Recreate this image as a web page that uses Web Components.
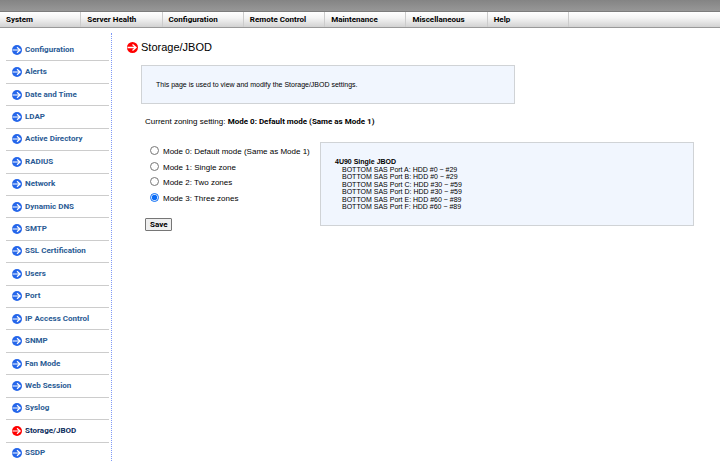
<!DOCTYPE html>
<html lang="en">
<head>
<meta charset="utf-8">
<title>Storage/JBOD</title>
<style>
    /* the side menu runs on below the fold */
    html { overflow: hidden; }
    body {
        margin: 0;
        background: #fff;
        color: #000;
        font: 8px/12px Roboto, "Liberation Sans", Arial, sans-serif;
    }
    .columns {
        display: flex;
        align-items: flex-start;
    }
</style>
</head>
<body>
<menu-bar items="System,Server Health,Configuration,Remote Control,Maintenance,Miscellaneous,Help"></menu-bar>
<div class="columns">
    <side-menu current="Storage/JBOD" items="Configuration,Alerts,Date and Time,LDAP,Active Directory,RADIUS,Network,Dynamic DNS,SMTP,SSL Certification,Users,Port,IP Access Control,SNMP,Fan Mode,Web Session,Syslog,Storage/JBOD,SSDP"></side-menu>
    <storage-page>
        <span slot="title">Storage/JBOD</span>
        <info-box slot="intro">This page is used to view and modify the Storage/JBOD settings.</info-box>
        <span slot="current">Mode 0: Default mode (Same as Mode 1)</span>
        <zone-form slot="form" selected="3" modes="Mode 0: Default mode (Same as Mode 1),Mode 1: Single zone,Mode 2: Two zones,Mode 3: Three zones"></zone-form>
        <info-box slot="details">
            <port-list heading="4U90 Single JBOD" ports="BOTTOM SAS Port A: HDD #0 ~ #29,BOTTOM SAS Port B: HDD #0 ~ #29,BOTTOM SAS Port C: HDD #30 ~ #59,BOTTOM SAS Port D: HDD #30 ~ #59,BOTTOM SAS Port E: HDD #60 ~ #89,BOTTOM SAS Port F: HDD #60 ~ #89"></port-list>
        </info-box>
    </storage-page>
</div>

<script>
const listOf = (el, name) => (el.getAttribute(name) || '').split(',');

// Round bullet with a white arrow
class ArrowIcon extends HTMLElement {
    constructor() {
        super();
        this.attachShadow({ mode: 'open' });
        this.shadowRoot.innerHTML = `
        <style>
            :host { display: block; width: 10px; height: 10px; color: #2566ea; }
            svg { display: block; width: 100%; height: 100%; }
        </style>
        <svg viewBox="0 0 22 22" aria-hidden="true">
            <circle cx="11" cy="11" r="11" fill="currentColor"/>
            <path d="M1 11H18M11 5L18 11L11 17" fill="none" stroke="#fff" stroke-width="2.6"/>
        </svg>`;
    }
}
customElements.define('arrow-icon', ArrowIcon);

class MenuBar extends HTMLElement {
    connectedCallback() {
        this.attachShadow({ mode: 'open' });
        this.shadowRoot.innerHTML = `
        <style>
            :host { display: block; }
            .strip {
                height: 11px;
                background: linear-gradient(#848484, #979797);
                border-bottom: 1px solid #7c7c7c;
            }
            nav {
                height: 15px;
                background: linear-gradient(#fff, #f4f4f4 40%, #d2d2d2);
                border-bottom: 1px solid #999;
            }
            ul {
                display: grid;
                grid-template-columns: repeat(7, 1fr);
                width: 569px;
                margin: 0;
                padding: 0;
                list-style: none;
            }
            li { border-right: 1px solid #ccc; }
            a {
                display: block;
                padding-left: 6px;
                font-weight: bold;
                line-height: 15px;
                color: #000;
                text-decoration: none;
            }
        </style>
        <div class="strip"></div>
        <nav><ul>${listOf(this, 'items').map(t => `<li><a href="#">${t}</a></li>`).join('')}</ul></nav>`;
    }
}
customElements.define('menu-bar', MenuBar);

class SideMenu extends HTMLElement {
    connectedCallback() {
        const current = this.getAttribute('current');
        this.attachShadow({ mode: 'open' });
        this.shadowRoot.innerHTML = `
        <style>
            :host {
                display: block;
                flex: none;
                width: 105px;
                margin-top: 5px;
                padding: 6px 0 0 6px;
                border-right: 1px dotted #7f9af6;
            }
            ul {
                display: grid;
                grid-auto-rows: 1fr;
                height: 426px;
                width: 103px;
                margin: 0;
                padding: 0;
                list-style: none;
            }
            li {
                display: flex;
                align-items: center;
                border-bottom: 1px solid #ccc;
            }
            a {
                display: flex;
                align-items: center;
                gap: 3px;
                padding-left: 6px;
                font-weight: bold;
                color: #2a5b94;
                text-decoration: none;
            }
            a[aria-current] { color: #0b2c5c; }
            a[aria-current] arrow-icon { color: #f00; }
        </style>
        <nav><ul>${listOf(this, 'items').map(t => `
            <li><a href="#"${t === current ? ' aria-current="page"' : ''}><arrow-icon></arrow-icon>${t}</a></li>`).join('')}
        </ul></nav>`;
    }
}
customElements.define('side-menu', SideMenu);

class InfoBox extends HTMLElement {
    constructor() {
        super();
        this.attachShadow({ mode: 'open' });
        this.shadowRoot.innerHTML = `
        <style>
            :host {
                display: block;
                box-sizing: border-box;
                padding: 14px;
                border: 1px solid #d0d3d6;
                background: #f1f6fe;
                font-family: "Liberation Sans", Arial, sans-serif;
                font-size: 7px;
                line-height: 9px;
            }
        </style>
        <slot></slot>`;
    }
}
customElements.define('info-box', InfoBox);

class PortList extends HTMLElement {
    connectedCallback() {
        this.attachShadow({ mode: 'open' });
        this.shadowRoot.innerHTML = `
        <style>
            :host { display: grid; grid-auto-rows: 1fr; height: 53px; padding-top: 1px; line-height: 7px; }
            div { padding-left: 7px; }
        </style>
        <strong>${this.getAttribute('heading')}</strong>
        ${listOf(this, 'ports').map(t => `<div>${t}</div>`).join('')}`;
    }
}
customElements.define('port-list', PortList);

class ZoneForm extends HTMLElement {
    connectedCallback() {
        const selected = Number(this.getAttribute('selected'));
        this.attachShadow({ mode: 'open' });
        this.shadowRoot.innerHTML = `
        <style>
            :host { display: block; }
            .modes {
                display: grid;
                grid-auto-rows: 1fr;
                height: 63px;
                padding-left: 5px;
            }
            label { display: flex; align-items: flex-end; gap: 4px; }
            input { width: 9px; height: 9px; margin: 0 0 3px; accent-color: #0b6cf5; }
            span { line-height: 12px; }
            button {
                margin-top: 13px;
                padding: 0 4px;
                border: 1px solid #767676;
                border-radius: 1px;
                background: #efefef;
                color: #000;
                font: bold 8px/11px Roboto, "Liberation Sans", Arial, sans-serif;
            }
        </style>
        <form>
            <div class="modes">${listOf(this, 'modes').map((t, i) => `
                <label><input type="radio" name="mode"${i === selected ? ' checked' : ''}><span>${t}</span></label>`).join('')}
            </div>
            <button type="button">Save</button>
        </form>`;
    }
}
customElements.define('zone-form', ZoneForm);

class StoragePage extends HTMLElement {
    constructor() {
        super();
        this.attachShadow({ mode: 'open' });
        this.shadowRoot.innerHTML = `
        <style>
            :host {
                display: block;
                flex: 1;
                padding: 12px 26px 0 15px;
                font-family: "Liberation Sans", Arial, sans-serif;
            }
            h1 {
                display: flex;
                align-items: center;
                gap: 3px;
                margin: 0;
                font-size: 11px;
                font-weight: normal;
                line-height: 14px;
            }
            arrow-icon { width: 11px; height: 11px; color: #f00; }
            .intro { display: grid; max-width: 374px; margin: 11px 0 0 14px; }
            .current { margin: 12px 0 0 18px; }
            b { font-family: Roboto, Arial, sans-serif; }
            .zones {
                display: grid;
                grid-template-columns: 175px 1fr;
                align-items: start;
                margin: 14px 0 0 18px;
            }
        </style>
        <h1><arrow-icon></arrow-icon><slot name="title"></slot></h1>
        <div class="intro"><slot name="intro"></slot></div>
        <div class="current">Current zoning setting: <b><slot name="current"></slot></b></div>
        <div class="zones"><slot name="form"></slot><slot name="details"></slot></div>`;
    }
}
customElements.define('storage-page', StoragePage);
</script>
</body>
</html>
